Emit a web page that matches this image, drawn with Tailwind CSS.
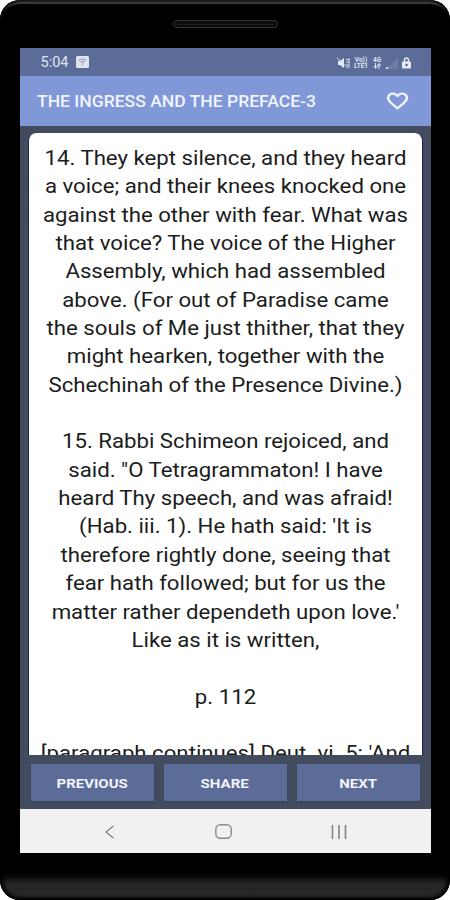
<!DOCTYPE html>
<html lang="en">
<head>
    <meta charset="UTF-8">
    <meta name="viewport" content="width=device-width, initial-scale=1.0">
    <title>The Ingress and the Preface</title>
    <script src="https://cdn.jsdelivr.net/npm/@tailwindcss/browser@4"></script>
</head>
<body class="bg-white font-[Roboto,sans-serif]">
    <!-- Phone frame -->
    <div class="w-[450px] h-[900px] rounded-[20px] bg-linear-to-b from-black from-[868px] to-[#262626] to-[884px] shadow-[inset_0_-2px_3px_#000,inset_3px_0_4px_#000,inset_-3px_0_4px_#000,inset_0_4px_0_#444] overflow-hidden flex flex-col items-center">
        <!-- Speaker -->
        <div class="h-[48px] w-full flex justify-center pt-[20px]">
            <div class="w-[105px] h-2 rounded-full border border-[#333] bg-[#0c0c0c] flex items-center px-1">
                <div class="w-full border-t border-dotted border-[#333]"></div>
            </div>
        </div>

        <!-- Screen -->
        <div class="w-[411px] h-[805px] flex flex-col bg-[#434b5f]">
            <!-- Status bar -->
            <div class="h-7 shrink-0 bg-[#5b6c98] flex items-center pl-[21px] pr-[20px] text-[#dfe4f2]">
                <span class="text-[14.5px] leading-none pt-[2px]">5:04</span>
                <svg class="ml-[8px]" width="13" height="12" viewBox="0 0 13 12">
                    <rect width="13" height="12" rx="1.5" fill="#e0e4ef"/>
                    <path d="M3 4.5q3.500-3 7 0M4.500 6.300q2-1.600 4 0M6.500 7v2" fill="none" stroke="#8590b0" stroke-width="1.200"/>
                </svg>
                <div class="ml-auto flex items-center gap-[4px] pt-[2px]">
                    <svg width="13" height="12" viewBox="0 0 13 12">
                        <path d="M1 4h2l4-3v10L3 8H1z" fill="#e4e8f4"/>
                        <path d="M0 1l11 10M9 2.500h3M9 5h3M9 8h3M12 1v10" stroke="#d5dbeb" fill="none"/>
                    </svg>
                    <div class="w-[15px] text-[6.5px] font-bold text-center flex flex-col items-center">
                        <span class="leading-[7px] h-[6px]">Vo))</span>
                        <span class="leading-[7px] h-[7px]">LTE1</span>
                    </div>
                    <div class="w-[9px] text-[6.5px] font-bold flex flex-col items-center">
                        <span class="leading-[7px] h-[6px]">4G</span>
                        <svg width="8" height="6" viewBox="0 0 8 6"><path d="M2.500 0v5M.5 3l2 2.500 2-2.500M6 6V1M4 3l2-2.500 2 2.500" stroke="#dfe4f2" fill="none"/></svg>
                    </div>
                    <svg width="12" height="11" viewBox="0 0 12 11">
                        <path d="M0 9h2.500v2H0z" fill="#c5cde2"/>
                        <path d="M3.500 7H6v4H3.500zM6.500 4H9v7H6.500zM9.500 1H12v10H9.500z" fill="#7280a8"/>
                    </svg>
                    <svg width="9" height="12" viewBox="0 0 9 12">
                        <path d="M2.500 5V3a2 2 0 0 1 4 0v2" fill="none" stroke="#e6eaf5" stroke-width="1.400"/>
                        <rect y="4.500" width="9" height="7" rx="1" fill="#e6eaf5"/>
                        <circle cx="4.500" cy="8" r="1.300" fill="#5b6c98"/>
                    </svg>
                </div>
            </div>

            <!-- App bar -->
            <header class="h-[50px] shrink-0 bg-[#8198d8] flex items-center justify-between pl-[17px] pr-[21px] text-white">
                <h1 class="text-[16px] font-medium whitespace-nowrap text-[#f0f4ff] origin-left scale-x-[1.095] pt-[2px]">THE INGRESS AND THE PREFACE-3</h1>
                <svg class="w-[25px] h-[22px]" viewBox="0 0 24 24" preserveAspectRatio="none" fill="#f6f8ff">
                    <path stroke="#f6f8ff" stroke-width=".4" d="M16.500 3c-1.740 0-3.410.81-4.500 2.090C10.910 3.810 9.240 3 7.500 3 4.420 3 2 5.420 2 8.500c0 3.780 3.400 6.860 8.550 11.540L12 21.350l1.450-1.320C18.600 15.360 22 12.280 22 8.500 22 5.420 19.580 3 16.500 3zm-4.400 15.550l-.1.100-.1-.1C7.140 14.240 4 11.390 4 8.500 4 6.500 5.500 5 7.500 5c1.540 0 3.040.99 3.570 2.360h1.870C13.460 5.990 14.960 5 16.500 5c2 0 3.500 1.500 3.500 3.500 0 2.890-3.140 5.740-7.900 10.050z"/>
                </svg>
            </header>

            <!-- Reading card -->
            <main class="mt-[7px] mx-2 h-[622px] shrink-0 rounded-t-lg bg-white border-x border-[#1b2058] overflow-hidden pt-[11px] text-center text-[20px] leading-[28.35px] text-[#1c1c1c] whitespace-nowrap">
                <div class="scale-x-[1.11]">
                    <p>14. They kept silence, and they heard<br>
                        a voice; and their knees knocked one<br>
                        against the other with fear. What was<br>
                        that voice? The voice of the Higher<br>
                        Assembly, which had assembled<br>
                        above. (For out of Paradise came<br>
                        the souls of Me just thither, that they<br>
                        might hearken, together with the<br>
                        Schechinah of the Presence Divine.)</p>
                    <br>
                    <p>15. Rabbi Schimeon rejoiced, and<br>
                        said. "O Tetragrammaton! I have<br>
                        heard Thy speech, and was afraid!<br>
                        (Hab. iii. 1). He hath said: 'It is<br>
                        therefore rightly done, seeing that<br>
                        fear hath followed; but for us the<br>
                        matter rather dependeth upon love.'<br>
                        Like as it is written,</p>
                    <br>
                    <p>p. 112</p>
                    <br>
                    <p>[paragraph continues] Deut. vi. 5: 'And</p>
                </div>
            </main>

            <!-- Actions -->
            <div class="mt-[9px] h-[37px] shrink-0 px-[11px] grid grid-cols-3 gap-[10px] text-[13.5px] font-bold text-[#f1f4fc]">
                <button class="bg-[#5b6c98] shadow-sm pt-[2px]"><span class="inline-block scale-x-[1.11]">PREVIOUS</span></button>
                <button class="bg-[#5b6c98] shadow-sm pt-[2px]"><span class="inline-block scale-x-[1.11]">SHARE</span></button>
                <button class="bg-[#5b6c98] shadow-sm pt-[2px]"><span class="inline-block scale-x-[1.11]">NEXT</span></button>
            </div>

            <!-- System navigation -->
            <nav class="mt-auto h-[44px] shrink-0 bg-[#f1f1f1] flex items-center justify-between pl-[84px] pr-[84px] pt-[1px]">
                <svg width="11" height="14" viewBox="0 0 11 14"><path d="M9.500 1L2 7l7.500 6" fill="none" stroke="#8a8a8a" stroke-width="1.500"/></svg>
                <svg class="ml-[2px]" width="17" height="15" viewBox="0 0 17 15"><rect x=".8" y=".8" width="15.400" height="13.400" rx="4.500" fill="none" stroke="#8a8a8a" stroke-width="1.400"/></svg>
                <svg width="16" height="14" viewBox="0 0 16 14"><path d="M1.500 0v14M8 0v14M14.500 0v14" stroke="#8a8a8a" stroke-width="1.700"/></svg>
            </nav>
        </div>
    </div>
</body>
</html>
